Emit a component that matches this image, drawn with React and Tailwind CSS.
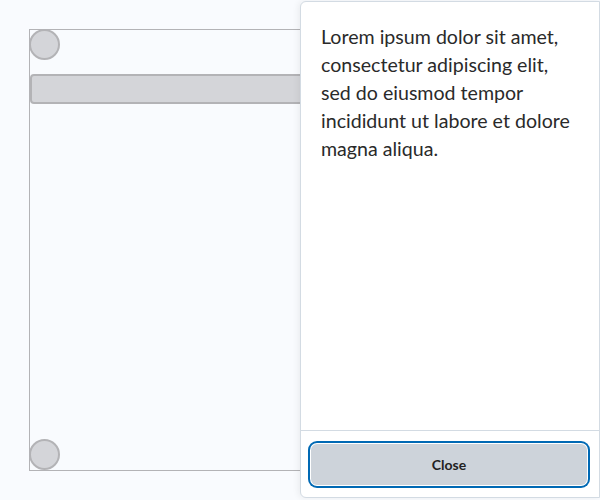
export default function App() {
  return (
    <div className="relative w-[600px] h-[500px] overflow-hidden bg-[#f9fbfe]" style={{ fontFamily: "Lato, 'Noto Sans', sans-serif" }}>
      <div className="pl-[29px] pt-[29px]">
        <div className="w-[560px] h-[442px] border border-[#b3b3b6] flex flex-col justify-between">
          <div className="flex flex-col">
            <div className="w-[31px] h-[31px] -ml-px -mt-px rounded-full border-2 border-[#b3b3b6] bg-[#d4d5d9]" />
            <div className="mt-[14px] h-[30px] rounded-[4px] border-2 border-[#b3b3b6] bg-[#d4d5d9]" />
          </div>
          <div className="w-[31px] h-[31px] -ml-px rounded-full border-2 border-[#b3b3b6] bg-[#d4d5d9]" />
        </div>
      </div>
      <div className="absolute right-0 top-px bottom-[2px] w-[300px] flex flex-col bg-white border border-[#d3dbe3] rounded-l-md shadow-[-2px_0_6px_rgba(0,0,0,0.06)]">
        <div className="flex-1 px-5 pt-[21px] text-[19.6px] leading-[28px] text-[#2a2a2a]">
          Lorem ipsum dolor sit amet, consectetur adipiscing elit, sed do eiusmod tempor incididunt ut labore et dolore magna aliqua.
        </div>
        <div className="border-t border-[#d3dbe3] pt-[13px] pb-[12px] pl-[10px] pr-[12px]">
          <button className="w-full h-[41px] pb-px rounded-md bg-[#cdd3da] text-[14px] font-bold text-[#222] ring-2 ring-[#0069b4] ring-offset-1 ring-offset-white">
            Close
          </button>
        </div>
      </div>
    </div>
  );
}
